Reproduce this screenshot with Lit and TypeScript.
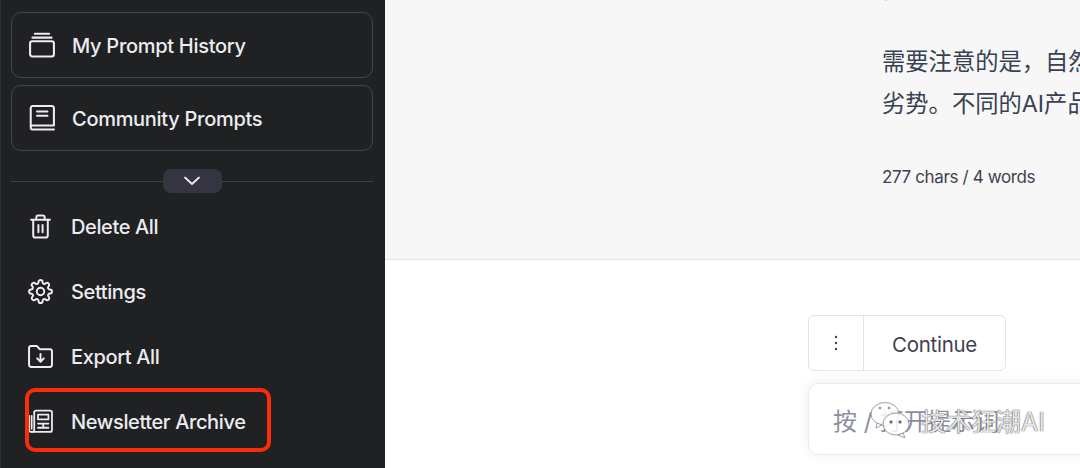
import { LitElement, html, css, svg } from "lit";
import { customElement } from "lit/decorators.js";

const ic = (p: unknown, w = 26, sw = 1.9) => html`<svg class="ic" width=${w} height=${w} viewBox="0 0 24 24" fill="none" stroke="currentColor" stroke-width=${sw} stroke-linecap="round" stroke-linejoin="round">${p}</svg>`;

const history = svg`<rect x="1" y="8.6" width="22" height="14" rx="2"/><path d="M3.2 5.2h17.6"/><path d="M5.4 1.6h13.2"/>`;
const book = svg`<path d="M1.6 20.2V2.8A1.8 1.8 0 0 1 3.4 1h17.8A1.8 1.8 0 0 1 23 2.8V19H3.4a1.8 1.8 0 0 0-1.8 1.8 1.8 1.8 0 0 0 1.8 1.8H23"/><path d="M7.4 6h9.6M7.4 10h9.6"/>`;
const trash = svg`<path d="M3 5.6h18"/><path d="M8 5.2V3.2A1.8 1.8 0 0 1 9.8 1.4h4.4A1.8 1.8 0 0 1 16 3.2v2"/><path d="M5 5.6v15a2 2 0 0 0 2 2h10a2 2 0 0 0 2-2v-15"/><path d="M10 10.5v7M14 10.5v7"/>`;
const gear = svg`<circle cx="12" cy="12" r="3.6"/><path d="M19.4 15a1.65 1.65 0 0 0 .33 1.82l.06.06a2 2 0 1 1-2.83 2.83l-.06-.06a1.65 1.65 0 0 0-1.82-.33 1.65 1.65 0 0 0-1 1.51V21a2 2 0 1 1-4 0v-.09A1.65 1.65 0 0 0 9 19.4a1.65 1.65 0 0 0-1.82.33l-.06.06a2 2 0 1 1-2.83-2.83l.06-.06a1.65 1.65 0 0 0 .33-1.82 1.65 1.65 0 0 0-1.51-1H3a2 2 0 1 1 0-4h.09A1.65 1.65 0 0 0 4.6 9a1.65 1.65 0 0 0-.33-1.82l-.06-.06a2 2 0 1 1 2.83-2.83l.06.06a1.65 1.65 0 0 0 1.82.33H9a1.65 1.65 0 0 0 1-1.51V3a2 2 0 1 1 4 0v.09a1.65 1.65 0 0 0 1 1.51 1.65 1.65 0 0 0 1.82-.33l.06-.06a2 2 0 1 1 2.83 2.83l-.06.06a1.65 1.65 0 0 0-.33 1.82V9a1.65 1.65 0 0 0 1.51 1H21a2 2 0 1 1 0 4h-.09a1.65 1.65 0 0 0-1.51 1z"/>`;
const folder = svg`<path d="M1 4a2 2 0 0 1 2-2h5.6l2.6 3H21a2 2 0 0 1 2 2v13a2 2 0 0 1-2 2H3a2 2 0 0 1-2-2z"/><path d="M12 9.5v7.5M8.8 13.8l3.2 3.2 3.2-3.2"/>`;
const news = svg`<path d="M6 3.2a1.6 1.6 0 0 1 1.6-1.6h13.8A1.6 1.6 0 0 1 23 3.2v17.2a1.6 1.6 0 0 1-1.6 1.6H3a2 2 0 0 1-2-2V6.5"/><path d="M6 3.2V20a2 2 0 0 1-2 2"/><path d="M3.5 6.5V19"/><rect x="9.6" y="5.4" width="10" height="4.6"/><path d="M9.6 14h10M9.6 18h10M14.6 14v4"/>`;

@customElement("app-root")
export class AppRoot extends LitElement {
  static styles = css`
    :host { display: flex; width: 1080px; height: 468px; overflow: hidden; position: relative; font-family: Inter, "Noto Sans CJK SC", sans-serif; }
    .side { width: 385px; flex: none; box-sizing: border-box; background: #202123; border-left: 1px solid #2c2d30; padding: 12px 12px 0 10px; display: flex; flex-direction: column; color: #fff; }
    .card { height: 66px; box-sizing: border-box; border: 1px solid #434446; border-radius: 10px; display: flex; align-items: center; gap: 17px; padding-left: 17px; margin-bottom: 7px; font-size: 20px; font-weight: 500; letter-spacing: -0.29px; color: #ececf1; }
    .card span { padding-top: 2px; }
    .sep { margin-top: 23px; height: 1px; background: #3f4042; margin-bottom: 13px; display: flex; justify-content: center; }
    .pill { width: 59px; height: 24px; border-radius: 8px; background: #343541; margin-top: -12px; display: flex; align-items: center; justify-content: center; color: #ececf1; flex: none; }
    .row { height: 65px; display: flex; align-items: center; gap: 18px; padding-left: 17px; font-size: 20px; font-weight: 500; letter-spacing: -0.38px; color: #ececf1; }
    .rows { margin-top: -1px; display: flex; flex-direction: column; }
    .ic { flex: none; }
    .main { flex: 1; min-width: 0; display: flex; flex-direction: column; background: #fff; }
    .top { height: 260px; box-sizing: border-box; background: #f7f7f8; border-bottom: 1px solid #e5e5e5; padding-left: 497px; overflow: hidden; color: #374151; white-space: nowrap; }
    .frag { margin: -31px 0 0 0; font-size: 23.3px; line-height: 42px; }
    .para { margin: 30px 0 0 0; font-size: 23.3px; line-height: 42px; }
    .count { margin-top: 40px; font-size: 17px; line-height: 24px; letter-spacing: -0.37px; color: #40414f; }
    .bottom { flex: 1; padding: 55px 0 0 423px; display: flex; flex-direction: column; }
    .btns { width: 198px; height: 56px; box-sizing: border-box; border: 1px solid #e5e5e5; border-radius: 6px; display: flex; color: #40414f; }
    .more { width: 54px; border-right: 1px solid #e5e5e5; display: flex; align-items: center; justify-content: center; }
    .cont { flex: 1; display: flex; align-items: center; justify-content: center; font-size: 20.5px; letter-spacing: -0.3px; padding-top: 2px; }
    .input { margin-top: 12px; width: 320px; height: 72px; box-sizing: border-box; border: 1px solid #ececf1; border-radius: 10px; box-shadow: 0 0 14px rgba(0,0,0,.07); padding-left: 24px; display: flex; align-items: center; font-size: 24px; color: #8e8ea0; background: #fff; white-space: nowrap; }
    .mark { position: absolute; left: 868px; top: 402px; display: flex; align-items: center; gap: 11px; font-size: 25px; color: rgba(255,255,255,.85); text-shadow: 0 0 1px #555, 0 0 1px #555; }
    .red { position: absolute; left: 25px; top: 388px; width: 246px; height: 64px; box-sizing: border-box; border: 4px solid #fb2c0a; border-radius: 10px; pointer-events: none; }
  `;
  render() {
    return html`
      <aside class="side">
        <div class="card">${ic(history)}<span>My Prompt History</span></div>
        <div class="card">${ic(book)}<span>Community Prompts</span></div>
        <div class="sep"><div class="pill"><svg width="20" height="20" viewBox="0 0 20 20" fill="none" stroke="currentColor" stroke-width="1.8" stroke-linecap="round" stroke-linejoin="round"><path d="M3 6.5l7 6.5 7-6.5"/></svg></div></div>
        <div class="rows">
          <div class="row">${ic(trash, 25, 1.9)}<span>Delete All</span></div>
          <div class="row">${ic(gear, 25, 1.9)}<span>Settings</span></div>
          <div class="row">${ic(folder, 25, 1.9)}<span>Export All</span></div>
          <div class="row">${ic(news, 25, 1.7)}<span>Newsletter Archive</span></div>
        </div>
      </aside>
      <main class="main">
        <section class="top">
          <p class="frag">例）</p>
          <p class="para">需要注意的是，自然语言<br />劣势。不同的AI产品有</p>
          <div class="count">277 chars / 4 words</div>
        </section>
        <section class="bottom">
          <div class="btns">
            <div class="more"><svg width="6" height="18" viewBox="0 0 6 18" fill="#40414f"><circle cx="3" cy="3" r="1.2"/><circle cx="3" cy="9" r="1.2"/><circle cx="3" cy="15" r="1.2"/></svg></div>
            <div class="cont">Continue</div>
          </div>
          <div class="input">按 / 打开提示词</div>
        </section>
      </main>
      <div class="mark">
        <svg width="42" height="36" viewBox="0 0 42 36" fill="rgba(255,255,255,.85)" stroke="#888" stroke-width=".8"><ellipse cx="17" cy="12" rx="14" ry="11.5"/><path d="M9 21l-1 5 6-3z"/><ellipse cx="28" cy="22" rx="13" ry="11"/><path d="M35 31l2 5-7-3z"/><circle cx="23" cy="20" r="1.3" fill="#555"/><circle cx="32" cy="20" r="1.3" fill="#555"/><circle cx="12" cy="6" r="1" fill="#aaa"/><circle cx="21" cy="6" r="1" fill="#aaa"/></svg>
        <span>技术狂潮AI</span>
      </div>
      <div class="red"></div>
    `;
  }
}
